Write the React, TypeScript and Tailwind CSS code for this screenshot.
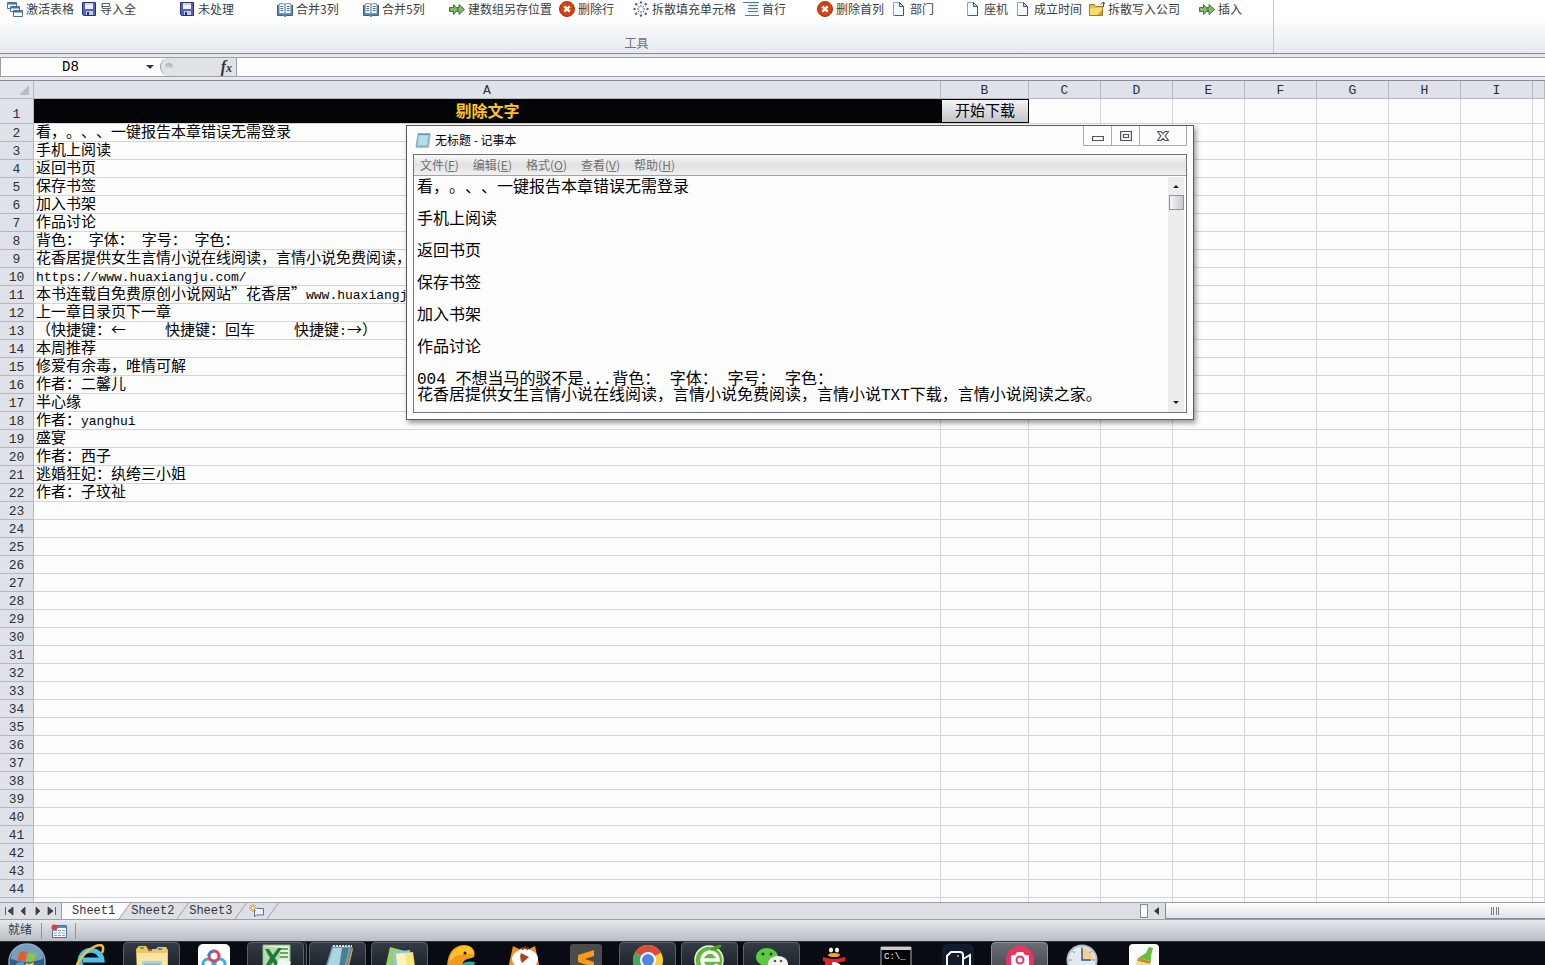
import React from "react";

type IconProps = { className?: string };

const CascadeIcon = () => (
  <svg viewBox="0 0 16 16" className="size-4 shrink-0" stroke="#47719f" fill="#fff">
    <path d="M.5 1.5h9v6h-9z" />
    <path d="M1 2.5h8" strokeWidth="2" />
    <path d="M3.5 5.5h9v5h-9z" />
    <path d="M4 6.5h8" strokeWidth="2" />
    <path d="M6.5 9.5h9v6h-9z" />
    <path d="M7 10.5h8" strokeWidth="2" />
  </svg>
);

const SaveIcon = () => (
  <svg viewBox="0 0 16 16" className="size-4 shrink-0">
    <path d="M1.500 1.500h13v13h-12l-1-1z" fill="#5661c5" stroke="#26307f" />
    <path d="M4 2h8v6H4z" fill="#f2f5ff" />
    <path d="M4 2h8v2H4z" fill="#c9d3f5" />
    <path d="M5 10h7v4H5z" fill="#c7cdec" />
    <path d="M6 11h2v3H6z" fill="#2b3180" />
  </svg>
);

const BookIcon = () => (
  <svg viewBox="0 0 16 16" className="size-4 shrink-0">
    <path d="M.5 4v10.500h6l1.500 1 1.500-1h6V4" fill="#5f8fbd" stroke="#34618f" />
    <path d="M2 3c3-1 5-.5 6 .5C9 2.500 11 2 14 3v10c-3-.7-5-.4-6 .6-1-1-3-1.300-6-.6z" fill="#f4f9ff" stroke="#4c6c8e" strokeWidth=".8" />
    <path d="M8 3.500v10M3.500 5.500H6M3.500 7.500H6M3.500 9.500H6M10 5.500h2.500M10 7.500h2.500M10 9.500h2.500" stroke="#41688f" />
  </svg>
);

const ArrowsIcon = () => (
  <svg viewBox="0 0 16 16" className="size-4 shrink-0" fill="#7fbd69" stroke="#3c6236" strokeWidth=".9">
    <path d="M.5 6.500h4V3.500l4.500 5-4.500 5v-3h-4z" />
    <path d="M8 6.500h2V3.500l5.500 5-5.500 5v-3H8l1.500-2z" />
  </svg>
);

const DeleteIcon = () => (
  <svg viewBox="0 0 16 16" className="size-4 shrink-0">
    <circle cx="8" cy="8" r="7.500" fill="#d8400f" stroke="#a93310" />
    <path d="M5.300 5.300l5.400 5.400M10.700 5.300l-5.400 5.400" stroke="#fff" strokeWidth="2.400" />
  </svg>
);

const ScatterIcon = () => (
  <svg viewBox="0 0 16 16" className="size-4 shrink-0" stroke="#4b668e" fill="#4b668e">
    <path d="M8 4v2M8 10v2M4 8h2M10 8h2M5 5l1.500 1.500M9.500 9.500L11 11M11 5L9.500 6.500M6.500 9.500L5 11" />
    <g stroke="none">
      <circle cx="8" cy="1.500" r="1.200" />
      <circle cx="8" cy="14.500" r="1.200" />
      <circle cx="1.500" cy="8" r="1.200" />
      <circle cx="14.500" cy="8" r="1.200" />
      <circle cx="3.200" cy="3.200" r="1.200" />
      <circle cx="12.800" cy="3.200" r="1.200" />
      <circle cx="3.200" cy="12.800" r="1.200" />
      <circle cx="12.800" cy="12.800" r="1.200" />
    </g>
  </svg>
);

const LinesIcon = () => (
  <svg viewBox="0 0 16 16" className="size-4 shrink-0" stroke="#4f7a96">
    <path d="M0 1.500h16M5 4.500h10M5 7.500h10M5 10.500h10M2 14.500h14" />
    <path d="M6 3h9M6 6h9M6 9h9M6 12h9" stroke="#d5e3ec" />
  </svg>
);

const PageIcon = () => (
  <svg viewBox="0 0 16 16" className="size-4 shrink-0">
    <path d="M2.500 1.500h6l4 4v9h-10z" fill="#f8fbff" stroke="#8da2bd" />
    <path d="M8.500 1.500v4h4z" fill="#bfd3ec" stroke="#3d5a83" />
    <path d="M12.500 5v9.500h-9" fill="none" stroke="#3d5a83" />
  </svg>
);

const FolderIcon = () => (
  <svg viewBox="0 0 16 16" className="size-4 shrink-0">
    <path d="M.5 3.500h5l1 2h7v9H.5z" fill="#f3bd35" stroke="#9a7a2e" />
    <path d="M1 7h12v7H1z" fill="#fbdc6a" />
    <path d="M8 14l5-5v5z" fill="#dc9d1d" />
    <path d="M14.500 6V1.500M11.500 3.500l3-2.500L16 3" fill="none" stroke="#444b56" />
  </svg>
);

const tools = [
  { label: "激活表格", Icon: CascadeIcon, width: "w-[74px]" },
  { label: "导入全", Icon: SaveIcon, width: "w-[98px]" },
  { label: "未处理", Icon: SaveIcon, width: "w-[98px]" },
  { label: "合并3列", Icon: BookIcon, width: "w-[86px]" },
  { label: "合并5列", Icon: BookIcon, width: "w-[86px]" },
  { label: "建数组另存位置", Icon: ArrowsIcon, width: "w-[110px]" },
  { label: "删除行", Icon: DeleteIcon, width: "w-[74px]" },
  { label: "拆散填充单元格", Icon: ScatterIcon, width: "w-[110px]" },
  { label: "首行", Icon: LinesIcon, width: "w-[74px]" },
  { label: "删除首列", Icon: DeleteIcon, width: "w-[74px]" },
  { label: "部门", Icon: PageIcon, width: "w-[74px]" },
  { label: "座机", Icon: PageIcon, width: "w-[50px]" },
  { label: "成立时间", Icon: PageIcon, width: "w-[74px]" },
  { label: "拆散写入公司", Icon: FolderIcon, width: "w-[110px]" },
  { label: "插入", Icon: ArrowsIcon, width: "w-[74px]" },
];

const Ribbon = () => (
  <header className="h-[54px] shrink-0 flex bg-linear-to-b from-white from-30% to-[#e6eaef] border-b border-[#868b94]">
    <section className="w-[1274px] shrink-0 flex flex-col justify-between pb-0.5 border-r border-[#c3c7ce]">
      <div className="flex pl-[7px]">
        {tools.map(({ label, Icon, width }) => (
          <button
            key={label}
            type="button"
            className={`${width} shrink-0 h-[18px] flex items-center gap-[3px] text-xs whitespace-nowrap text-[#3a3d44]`}
          >
            <Icon />
            {label}
          </button>
        ))}
      </div>
      <p className="text-center text-xs leading-4 text-[#6b7079]">工具</p>
    </section>
  </header>
);

const FormulaBar = () => (
  <div className="h-[27px] shrink-0 pt-[3px] bg-[#e6e9ed] border-b border-[#868b94]">
    <div className="h-5 flex bg-[#fdfdfd] border-y border-[#9a9fa8]">
      <input
        aria-label="名称框"
        defaultValue="D8"
        className="w-[140px] shrink-0 border-l border-[#9a9fa8] text-center text-sm leading-4 font-[Liberation_Mono,monospace] outline-none"
      />
      <button type="button" aria-label="名称列表" className="w-5 shrink-0 flex items-center justify-center">
        <svg viewBox="0 0 8 4" className="w-2 h-1" fill="#33363b">
          <path d="M0 0h8L4 4z" />
        </svg>
      </button>
      <div className="w-[77px] shrink-0 flex items-center justify-between pl-1 pr-1 rounded-l-full bg-[#dfe2e7] border-l border-r border-[#9a9fa8]">
        <span className="size-2 rounded-full bg-linear-to-b from-[#a8adb5] to-[#eef0f3]" />
        <button
          type="button"
          aria-label="插入函数"
          className="text-base leading-4 italic font-bold text-[#33363b] font-[Liberation_Serif,serif]"
        >
          f<span className="text-xs">x</span>
        </button>
      </div>
      <input aria-label="编辑栏" className="flex-1 min-w-0 px-1 text-sm outline-none" />
    </div>
  </div>
);

const Mono = ({ children }: { children: React.ReactNode }) => (
  <span className="text-[13px] leading-none font-[Liberation_Mono,monospace]">{children}</span>
);

const columns = ["A", "B", "C", "D", "E", "F", "G", "H", "I", ""];

const cells: React.ReactNode[] = [
  "看，。、、一键报告本章错误无需登录",
  "手机上阅读",
  "返回书页",
  "保存书签",
  "加入书架",
  "作品讨论",
  <>背色：<Mono> </Mono>字体：<Mono> </Mono>字号：<Mono> </Mono>字色：</>,
  "花香居提供女生言情小说在线阅读，言情小说免费阅读，言情小说TXT下载，言情小说阅读之家。",
  <Mono>https://www.huaxiangju.com/</Mono>,
  <>本书连载自免费原创小说网站”花香居”<Mono>www.huaxiangju.com</Mono></>,
  "上一章目录页下一章",
  <>（快捷键：←<Mono>{"     "}</Mono>快捷键：回车<Mono>{"     "}</Mono>快捷键<Mono>:</Mono>→）</>,
  "本周推荐",
  "修爱有余毒，唯情可解",
  "作者：二馨儿",
  "半心缘",
  <>作者：<Mono>yanghui</Mono></>,
  "盛宴",
  "作者：西子",
  "逃婚狂妃：纨绔三小姐",
  "作者：子玟祉",
];

const rowNumbers = Array.from({ length: 43 }, (_, i) => i + 2);

const headStyle = "p-0 bg-[#dfe2e8] font-normal text-[13px] font-[Liberation_Mono,monospace] text-[#2d3035] border-r border-b border-[#b4b8bf]";

const Sheet = () => (
  <main className="flex-1 min-h-0 overflow-hidden bg-[#fdfdfd]">
    <table className="w-full table-fixed border-separate border-spacing-0">
      <colgroup>
        <col className="w-[34px]" />
        <col className="w-[907px]" />
        <col className="w-[88px]" />
        {columns.slice(2, 9).map((name) => (
          <col key={name} className="w-[72px]" />
        ))}
        <col />
      </colgroup>
      <thead>
        <tr>
          <th className={`${headStyle} h-[18px]`}>
            <svg viewBox="0 0 12 10" className="ml-auto mr-1 w-3 h-2.5" fill="#b9bdc5">
              <path d="M12 0v10H2z" />
            </svg>
          </th>
          {columns.map((name) => (
            <th key={name} scope="col" className={`${headStyle} h-[18px] pt-0.5 leading-[15px]`}>
              {name}
            </th>
          ))}
        </tr>
      </thead>
      <tbody>
        <tr>
          <th scope="row" className={`${headStyle} h-[25px] pt-2 leading-4`}>1</th>
          <td className="h-[25px] p-0 bg-[#040506] border-b border-[#d3d5da] text-center align-top text-base leading-[22px] font-bold text-[#ffc61a]">
            剔除文字
          </td>
          <td className="h-[25px] p-0 border-b border-[#d3d5da]">
            <button
              type="button"
              className="block w-full h-6 pb-0.5 border border-black bg-linear-to-b from-[#f4f4f6] to-[#c4c4c9] text-[15px] leading-5 text-black"
            >
              开始下载
            </button>
          </td>
          {columns.slice(2).map((name) => (
            <td key={name} className="h-[25px] p-0 border-r border-b border-[#d3d5da]" />
          ))}
        </tr>
        {rowNumbers.map((row, i) => (
          <tr key={row}>
            <th scope="row" className={`${headStyle} h-[18px] pt-0.5 leading-[15px]`}>{row}</th>
            <td className="h-[18px] p-0 pl-0.5 border-r border-b border-[#d3d5da] align-top text-[15px] leading-[14px] whitespace-pre text-black">
              {cells[i]}
            </td>
            {columns.slice(1).map((name) => (
              <td key={name} className="h-[18px] p-0 border-r border-b border-[#d3d5da]" />
            ))}
          </tr>
        ))}
        <tr>
          <th className={`${headStyle} h-[18px]`} />
          {columns.map((name) => (
            <td key={name} className="h-[18px] p-0 border-r border-[#d3d5da]" />
          ))}
        </tr>
      </tbody>
    </table>
  </main>
);

const menus = [
  { label: "文件", hotkey: "F" },
  { label: "编辑", hotkey: "E" },
  { label: "格式", hotkey: "O" },
  { label: "查看", hotkey: "V" },
  { label: "帮助", hotkey: "H" },
];

const noteText = `看，。、、一键报告本章错误无需登录

手机上阅读

返回书页

保存书签

加入书架

作品讨论

004 不想当马的驳不是...背色： 字体： 字号： 字色：
花香居提供女生言情小说在线阅读，言情小说免费阅读，言情小说TXT下载，言情小说阅读之家。`;

const NotepadIcon = ({ className }: IconProps) => (
  <svg viewBox="0 0 16 16" className={className}>
    <path d="M3 2h12l-2 13H1z" fill="#8fc8d6" stroke="#5d97a8" strokeWidth=".7" />
    <path d="M4 3.500h9l-1.500 9.500H3z" fill="#b5e0e8" />
    <path d="M1 15h12l2-12 .6.800L14 15.800H2z" fill="#c7b98a" />
    <path d="M4 1v2M6 1v2M8 1v2M10 1v2M12 1v2M14 1v2" stroke="#54707b" strokeWidth=".8" />
  </svg>
);

const Notepad = () => (
  <section className="absolute left-[406px] top-[125px] w-[788px] h-[295px] flex flex-col px-1.5 pb-1.5 bg-[#fdfdfd] border border-[#5a5c60] shadow-[2px_3px_5px_rgba(60,50,60,0.5)]">
    <div className="h-7 shrink-0 flex justify-between">
      <h1 className="flex items-center gap-1 pl-0.5 text-xs text-black">
        <NotepadIcon className="size-4" />
        无标题 - 记事本
      </h1>
      <div className="h-5 flex border-x border-b border-[#a9abb0] divide-x divide-[#a9abb0]">
        <button type="button" aria-label="最小化" className="w-7 flex items-center justify-center">
          <svg viewBox="0 0 12 12" className="size-3" fill="#fff" stroke="#4c5568" strokeWidth="1.200">
            <path d="M.6 6.500h10.800v4H.6z" />
          </svg>
        </button>
        <button type="button" aria-label="最大化" className="w-7 flex items-center justify-center">
          <svg viewBox="0 0 12 12" className="size-3" fill="#fff" stroke="#4c5568" strokeWidth="1.200">
            <path d="M.6 1.500h10.800v9H.6zM3.500 4.500h5v3h-5z" />
          </svg>
        </button>
        <button type="button" aria-label="关闭" className="w-[46px] flex items-center justify-center">
          <svg viewBox="0 0 12 12" className="size-3" fill="#fff" stroke="#4c5568" strokeWidth="1.200">
            <path d="M.6 1.500h3.400L6 3.700l2-2.200h3.400L8.200 6l3.200 4.500H8L6 8.300l-2 2.200H.6L3.800 6z" />
          </svg>
        </button>
      </div>
    </div>
    <div className="flex-1 min-h-0 flex flex-col border border-[#6f7277]">
      <nav className="h-[21px] shrink-0 flex items-center gap-3.5 pl-1.5 bg-linear-to-b from-[#f8f8f8] via-[#e2e2e3] to-[#f0f0f0] border-b border-[#a3a3a3]">
        {menus.map(({ label, hotkey }) => (
          <button key={hotkey} type="button" className="text-xs text-[#6f6f6f]">
            {label}(<u>{hotkey}</u>)
          </button>
        ))}
      </nav>
      <div className="flex-1 min-h-0 flex">
        <textarea
          aria-label="记事本内容"
          defaultValue={noteText}
          spellCheck={false}
          wrap="off"
          className="flex-1 min-w-0 resize-none overflow-hidden pl-[3px] pt-1 text-base leading-4 text-black outline-none font-[Liberation_Mono,Noto_Sans_CJK_SC,monospace]"
        />
        <div className="w-4 mr-0.5 mt-px flex flex-col items-center bg-[#ececee]">
          <button type="button" aria-label="向上滚动" className="h-[18px] flex items-center">
            <svg viewBox="0 0 6 3" className="w-1.5 h-[3px]" fill="#222">
              <path d="M0 3h6L3 0z" />
            </svg>
          </button>
          <div className="w-[15px] h-[15px] border border-[#8f9196] bg-linear-to-r from-[#f6f6f7] to-[#c9cacd]" />
          <button type="button" aria-label="向下滚动" className="mt-auto h-5 flex items-center">
            <svg viewBox="0 0 6 3" className="w-1.5 h-[3px]" fill="#222">
              <path d="M0 0h6L3 3z" />
            </svg>
          </button>
        </div>
      </div>
    </div>
  </section>
);

const TabEdge = () => (
  <svg viewBox="0 0 12 16" className="w-3 h-4 shrink-0" fill="none" stroke="#9da2ab">
    <path d="M0 16L11.500 0" />
  </svg>
);

const navPaths = [
  { label: "第一张", d: "M1.500 1v8M9 1v8L4 5z" },
  { label: "上一张", d: "M7 1v8L3 5z" },
  { label: "下一张", d: "M3 1v8l4-4z" },
  { label: "最后一张", d: "M1 1v8l5-4zM8.500 1v8" },
];

const SheetTabs = () => (
  <div className="h-[17px] shrink-0 flex bg-[#dcdfe4] border-t border-[#9a9fa8]">
    <div className="flex-1 min-w-0 flex items-stretch text-xs leading-4 font-[Liberation_Mono,monospace] text-[#33363b]">
      <div className="w-[62px] shrink-0 flex items-center justify-between px-1 border-r border-[#9a9fa8]">
        {navPaths.map(({ label, d }) => (
          <button key={label} type="button" aria-label={label}>
            <svg viewBox="0 0 10 10" className="size-2.5" fill="#3c4047" stroke="#3c4047" strokeWidth=".8">
              <path d={d} />
            </svg>
          </button>
        ))}
      </div>
      <button type="button" className="pl-2.5 pr-1 bg-[#fdfdfd]">Sheet1</button>
      <svg viewBox="0 0 12 16" className="w-3 h-4 shrink-0">
        <path d="M0 0h11.500L0 16z" fill="#fdfdfd" />
        <path d="M0 16L11.500 0" stroke="#9da2ab" />
      </svg>
      <button type="button" className="w-[46px] shrink-0 text-left">Sheet2</button>
      <TabEdge />
      <button type="button" className="w-[46px] shrink-0 text-left">Sheet3</button>
      <TabEdge />
      <button type="button" aria-label="插入工作表" className="px-0.5">
        <svg viewBox="0 0 16 14" className="w-4 h-3.5">
          <path d="M5.500 5v7.500l2-1.500h7V4.500H8" fill="#edf3fb" stroke="#5573a0" />
          <path d="M4 0v8M0 4h8M1.200 1.200l5.600 5.600M6.800 1.200L1.200 6.800" stroke="#cf8f3b" />
          <circle cx="4" cy="4" r="1.500" fill="#ffe27a" />
        </svg>
      </button>
      <TabEdge />
    </div>
    <div className="w-[405px] shrink-0 flex items-stretch">
      <div className="w-2 my-px border border-[#868b94] bg-white" />
      <button type="button" aria-label="向左滚动" className="w-[17px] flex items-center justify-center">
        <svg viewBox="0 0 5 8" className="w-[5px] h-2" fill="#33363b">
          <path d="M5 0v8L0 4z" />
        </svg>
      </button>
      <div className="flex-1 flex items-center justify-end pr-[46px] border-l border-b border-[#868b94] bg-linear-to-b from-white to-[#dde1e8]">
        <div className="w-2 h-2 flex justify-between">
          <i className="w-px bg-[#7b8088]" />
          <i className="w-px bg-[#7b8088]" />
          <i className="w-px bg-[#7b8088]" />
          <i className="w-px bg-[#7b8088]" />
        </div>
      </div>
    </div>
  </div>
);

const StatusBar = () => (
  <footer className="h-[22px] shrink-0 flex items-center pl-2 bg-linear-to-b from-[#e6e9ed] to-[#b9bec5] border-t border-[#9a9fa8] text-xs leading-4 text-[#3a3d44]">
    <span className="w-[33px] pb-1">就绪</span>
    <span className="w-[35px] h-4 flex items-center justify-center border-x border-[#8f949d]">
      <svg viewBox="0 0 16 14" className="w-4 h-3.5">
        <path d="M1.500 1.500h14v12h-14z" fill="#fff" stroke="#4a6fa5" />
        <path d="M2 2h13v2H2z" fill="#5b86c4" />
        <path d="M3 6.500h3M7 6.500h3M11 6.500h3M3 9h3M7 9h3M11 9h3M3 11.500h3M7 11.500h3M11 11.500h3" stroke="#7f9dc9" />
        <circle cx="3.500" cy="3.500" r="3" fill="#cc4a33" />
      </svg>
    </span>
  </footer>
);

const icon = "size-8 shrink-0";

const WindowsOrb = () => (
  <svg viewBox="0 0 40 40" className="size-10 shrink-0">
    <circle cx="20" cy="20" r="18" fill="#2d5f8d" stroke="#8fa9bd" strokeWidth="1.500" />
    <path d="M4 17a16 15 0 0 1 32 0q-16 6-32 0z" fill="#8db5cf" opacity=".75" />
    <path d="M12 11q4-3 8-1l-2 9q-4-2-8 1z" fill="#ee5a25" />
    <path d="M21.500 10.500q4 2 8-1l-2 9q-4 3-8 1z" fill="#8cc63f" />
    <path d="M9.500 21.500q4-3 8-1l-2 9q-4-2-8 1z" fill="#33a5e6" />
    <path d="M19 21q4 2 8-1l-2 9q-4 3-8 1z" fill="#fdc82f" />
  </svg>
);

const IeIcon = () => (
  <svg viewBox="0 0 32 32" className={icon} fill="none">
    <path d="M27 22a11 11 0 1 1 1-6H9" stroke="#4cc0ee" strokeWidth="5" />
    <path d="M2 30C-1 24 8 10 18 4s13-2 10 5" stroke="#f5c12d" strokeWidth="2.500" />
  </svg>
);

const ExplorerIcon = () => (
  <svg viewBox="0 0 32 32" className={icon}>
    <path d="M0 5l3-3h7l2 3h8l2-2h8l2 3v26H1z" fill="#e9c766" />
    <path d="M1 9h30v23H1z" fill="#f8e5a0" />
    <path d="M4 3h4v2H4z" fill="#63a744" />
    <path d="M12 5h4v2h-4z" fill="#c43d2d" />
    <path d="M22 4h4v2h-4z" fill="#3b8fd0" />
    <path d="M6 17h20v15H6z" fill="#a5d5eb" />
    <path d="M8 20h16M8 23h16" stroke="#69a9cc" />
  </svg>
);

const CloudIcon = () => (
  <svg viewBox="0 0 32 32" className={icon} fill="none" strokeWidth="3">
    <rect width="32" height="32" rx="5" fill="#fff" />
    <circle cx="10" cy="20" r="5" stroke="#2fb1ee" />
    <circle cx="22" cy="20" r="5" stroke="#2fb1ee" />
    <circle cx="16" cy="12" r="5" stroke="#eb3f55" />
    <path d="M11 12a5 5 0 0 1 5-5" stroke="#3a7ff0" />
  </svg>
);

const ExcelIcon = () => (
  <svg viewBox="0 0 32 32" className={icon}>
    <path d="M3 1h27v30H3z" fill="#dff0dc" stroke="#82b77c" />
    <path d="M19 5h9M20 9h8M20 13h8" stroke="#69a862" strokeWidth="2" />
    <path d="M3 2l17 2v26L3 28z" fill="#9ccb90" opacity=".6" />
    <path d="M5 5h4l4 6 5-7h4l-7 10 7 12h-5l-4-8-6 8H3l7-12z" fill="#1e7c34" />
    <path d="M19 15l12 3-3 8-12-3z" fill="#f2f8f1" />
  </svg>
);

const JotterIcon = () => (
  <svg viewBox="0 0 32 32" className={icon}>
    <path d="M10 2h20l-7 29H1z" fill="#6f9cad" />
    <path d="M11 4h16l-6 26H3z" fill="#a9d6e2" />
    <path d="M20 4h7l-6 26h-5z" fill="#4c7d91" />
    <path d="M11 2h19" stroke="#d5dde0" strokeWidth="2" strokeDasharray="2 1" />
    <path d="M30 3l1 2-6 26h-2z" fill="#c7a567" />
  </svg>
);

const NotesIcon = () => (
  <svg viewBox="0 0 32 32" className={icon}>
    <path d="M6 3l15 4-5 22-15-4z" fill="#95d06c" />
    <path d="M9 8l17-2 3 22-18 2z" fill="#8fc4e8" />
    <path d="M12 10l17-2 3 22-18 2z" fill="#f7e580" />
    <path d="M12 10l9-1 2 12-9 1z" fill="#fdf4b5" />
  </svg>
);

const ParrotIcon = () => (
  <svg viewBox="0 0 32 32" className={icon}>
    <path d="M1 24C1 8 9 1 18 1s12 7 10 12c-5 3-11 0-12 10v9H2z" fill="#f49a1c" />
    <path d="M3 18C5 6 12 2 19 2c6 0 9 4 9 8-7 1-15-3-25 8z" fill="#fcc52a" />
    <circle cx="19" cy="9" r="1.500" fill="#1c1c1c" />
    <path d="M16 20c3-3 9-3 13-2l-4 14h-9z" fill="#2aa9a5" />
  </svg>
);

const TigerIcon = () => (
  <svg viewBox="0 0 32 32" className={icon}>
    <path d="M1 20L5 2l6 3q5-2 10 0l6-3 4 18-4 12H4z" fill="#f1921d" />
    <ellipse cx="17" cy="15" rx="13" ry="10" fill="#fff" />
    <path d="M13 9l8 4-7 6q-3-5-1-10z" fill="#a4482a" />
    <path d="M14 3l1 3M17 2v3M20 3l-1 3" stroke="#8a4210" strokeWidth="1.500" />
  </svg>
);

const SublimeIcon = () => (
  <svg viewBox="0 0 32 32" className={icon}>
    <rect width="32" height="32" rx="3" fill="#4b4b4d" />
    <path d="M24 6v6l-9 3 9 3v7L8 30v-6l9-3-9-3v-7z" fill="#f99b18" />
  </svg>
);

const ChromeIcon = () => (
  <svg viewBox="0 0 32 32" className={icon}>
    <circle cx="16" cy="16" r="15" fill="#f7cf3d" />
    <path d="M16 16L3 8.500a15 15 0 0 1 26 0z" fill="#dd4b3e" />
    <path d="M16 9h13L16 1z" fill="#dd4b3e" />
    <path d="M3 8.500L16 16l1 15A15 15 0 0 1 3 8.500z" fill="#4aa55b" />
    <circle cx="16" cy="16" r="7" fill="#4b86e8" stroke="#fff" strokeWidth="2" />
  </svg>
);

const BrowserIcon = () => (
  <svg viewBox="0 0 32 32" className={icon} fill="none">
    <circle cx="15" cy="16" r="14" fill="#62bb3b" stroke="#e6f5dd" strokeWidth="1.500" />
    <path d="M23 20a8 8 0 1 1 1-4H9" stroke="#fff" strokeWidth="3.500" />
    <path d="M16 6c4-5 8-5 12-5-2 4-6 6-12 5z" fill="#4b9d2c" />
  </svg>
);

const WechatIcon = () => (
  <svg viewBox="0 0 32 32" className={icon}>
    <ellipse cx="11" cy="13" rx="11" ry="9" fill="#5ecb3f" />
    <circle cx="7" cy="10" r="1.500" fill="#1f3f16" />
    <circle cx="15" cy="10" r="1.500" fill="#1f3f16" />
    <ellipse cx="22" cy="20" rx="10" ry="8" fill="#f3f3f3" />
    <circle cx="19" cy="17" r="1.300" fill="#565656" />
    <circle cx="25" cy="17" r="1.300" fill="#565656" />
  </svg>
);

const PenguinIcon = () => (
  <svg viewBox="0 0 32 32" className={icon}>
    <ellipse cx="16" cy="11" rx="10" ry="10" fill="#0a0a0a" />
    <path d="M5 16h22v16H5z" fill="#0a0a0a" />
    <ellipse cx="13" cy="6" rx="2" ry="2.500" fill="#fff" />
    <ellipse cx="19" cy="6" rx="2" ry="2.500" fill="#fff" />
    <ellipse cx="16" cy="11" rx="6" ry="2" fill="#f2a61c" />
    <path d="M5 13q11 4 22 0v4q-11 4-22 0z" fill="#e0242a" />
    <ellipse cx="16" cy="25" rx="8" ry="7" fill="#fff" />
    <path d="M7 16h7v9H7z" fill="#e0242a" />
  </svg>
);

const TerminalIcon = () => (
  <svg viewBox="0 0 32 32" className={icon}>
    <path d="M1 3h30v28H1z" fill="#050505" stroke="#a9adb3" />
    <path d="M1 3h30v3H1z" fill="#c9ccd1" />
    <text x="4" y="15" fontSize="9" fill="#f2f2f2" fontFamily="Liberation Mono">C:\_</text>
  </svg>
);

const CameraIcon = () => (
  <svg viewBox="0 0 32 32" className={icon} fill="none" stroke="#f4f6fa" strokeWidth="2">
    <rect width="32" height="32" rx="5" fill="#101b2b" stroke="none" />
    <path d="M9 8h9q3 0 3 3v15H5V12z" />
    <path d="M21 15l7-4v15l-7-4" />
    <circle cx="16" cy="12" r="1" fill="#f3a73a" stroke="none" />
  </svg>
);

const RecorderIcon = () => (
  <svg viewBox="0 0 32 32" className={icon}>
    <circle cx="16" cy="16" r="14" fill="#f1305f" />
    <path d="M8 11h3l2-3h6l2 3h3q1 0 1 1v11H7V12z" fill="#fff" />
    <circle cx="16" cy="16" r="3.500" fill="#fff" stroke="#f1305f" strokeWidth="2" />
  </svg>
);

const ClockIcon = () => (
  <svg viewBox="0 0 32 32" className={icon}>
    <circle cx="16" cy="16" r="14.500" fill="#dfeaf2" stroke="#b5bec6" strokeWidth="2" />
    <path d="M16 16V4a12 12 0 0 1 12 12z" fill="#f3cf95" />
    <path d="M16 4v12h9" fill="none" stroke="#3e5874" strokeWidth="1.500" />
    <path d="M16 3v3M29 16h-3M3 16h3M6.500 7l2 2M25.500 7l-2 2" stroke="#7b8c9b" />
  </svg>
);

const BroomIcon = () => (
  <svg viewBox="0 0 32 32" className={icon}>
    <rect x="1" width="30" height="32" rx="4" fill="#fbfcfa" />
    <path d="M21 3l4 1-2 8v5l-13-3 8-5z" fill="#65bf3b" />
    <path d="M10 14l13 3-1 3-13-3z" fill="#c9883a" />
    <path d="M9 17l13 3v9q-9 0-16-6z" fill="#f1e17c" />
  </svg>
);

const running = "border-[#596069] bg-linear-to-b from-[#343b44] to-[#171c22]";
const idle = "border-transparent";

const apps = [
  { label: "Internet Explorer", Icon: IeIcon, state: idle },
  { label: "资源管理器", Icon: ExplorerIcon, state: running },
  { label: "网盘", Icon: CloudIcon, state: idle },
  { label: "Excel", Icon: ExcelIcon, state: `${running} shadow-[2px_0_0_#171c22,3px_0_0_#596069]` },
  { label: "记事本", Icon: JotterIcon, state: running },
  { label: "便笺", Icon: NotesIcon, state: running },
  { label: "鹦鹉", Icon: ParrotIcon, state: idle },
  { label: "老虎", Icon: TigerIcon, state: idle },
  { label: "Sublime Text", Icon: SublimeIcon, state: idle },
  { label: "Chrome", Icon: ChromeIcon, state: running },
  { label: "浏览器", Icon: BrowserIcon, state: running },
  { label: "微信", Icon: WechatIcon, state: running },
  { label: "QQ", Icon: PenguinIcon, state: idle },
  { label: "命令提示符", Icon: TerminalIcon, state: idle },
  { label: "摄像机", Icon: CameraIcon, state: idle },
  { label: "录屏", Icon: RecorderIcon, state: "border-[#8c9197] bg-linear-to-b from-[#6a6e74] to-[#3f4349]" },
  { label: "时钟", Icon: ClockIcon, state: idle },
  { label: "清理", Icon: BroomIcon, state: idle },
];

const Taskbar = () => (
  <nav className="h-6 shrink-0 flex items-start overflow-hidden bg-[#080c12] border-t border-[#2c333c]">
    <button type="button" aria-label="开始" className="w-[54px] mr-[7px] h-10 shrink-0 flex items-center justify-center">
      <WindowsOrb />
    </button>
    <div className="flex gap-[5px]">
      {apps.map(({ label, Icon, state }) => (
        <button
          key={label}
          type="button"
          aria-label={label}
          className={`w-[57px] h-9 shrink-0 flex items-center justify-center border rounded-sm ${state}`}
        >
          <Icon />
        </button>
      ))}
    </div>
  </nav>
);

const App = () => {
  return (
    <div
      lang="zh-CN"
      className="relative h-screen flex flex-col overflow-hidden bg-white font-[Noto_Sans_CJK_SC,sans-serif] [text-spacing-trim:space-all]"
    >
      <Ribbon />
      <FormulaBar />
      <Sheet />
      <SheetTabs />
      <StatusBar />
      <Taskbar />
      <Notepad />
    </div>
  );
};

export default App;
